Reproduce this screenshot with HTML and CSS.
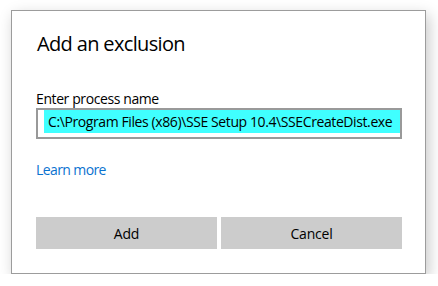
FILE: index.html
```html
<!DOCTYPE html>
<html>
<head>
<meta charset="utf-8">
<link rel="stylesheet" href="styles.css">
</head>
<body>
<div class="dialog">
  <h1 class="title">Add an exclusion</h1>
  <label class="label">Enter process name</label>
  <div class="input"><span class="sel">C:\Program Files (x86)\SSE Setup 10.4\SSECreateDist.exe</span></div>
  <a class="link">Learn more</a>
  <div class="buttons">
    <button class="btn">Add</button>
    <button class="btn">Cancel</button>
  </div>
</div>
</body>
</html>
```

FILE: styles.css
```css
html, body {
  margin: 0;
  padding: 0;
  background: #ffffff;
}
body {
  padding: 10px 0 0 11px;
  font-family: "Open Sans", "Noto Sans", sans-serif;
  color: #000;
}
.dialog {
  box-sizing: border-box;
  width: 415px;
  height: 264px;
  background: #fff;
  border: 1px solid #9c9c9c;
  box-shadow: 3px 5px 14px rgba(0,0,0,0.22);
  padding: 0 23px 0 24px;
  display: flex;
  flex-direction: column;
}
.title {
  margin: 19px 0 0 1px;
  font-size: 20px;
  font-weight: 400;
  line-height: 28px;
  letter-spacing: -0.65px;
}
.label {
  margin-top: 32px;
  font-size: 14px;
  line-height: 18px;
  letter-spacing: -0.4px;
  display: block;
}
.input {
  box-sizing: border-box;
  height: 31px;
  border: 2px solid #999;
  padding: 0 0 0 6px;
  display: flex;
  align-items: flex-start;
}
.sel {
  flex: 1;
  background: #40ffff;
  height: 23px;
  line-height: 23px;
  font-size: 14px;
  letter-spacing: -0.4px;
  padding-left: 4px;
  white-space: nowrap;
  overflow: hidden;
}
.link {
  margin-top: 22px;
  font-size: 14px;
  line-height: 18px;
  letter-spacing: -0.6px;
  color: #0a72cf;
  align-self: flex-start;
}
.buttons {
  margin-top: 38px;
  display: flex;
  gap: 4px;
}
.btn {
  flex: 1;
  height: 32px;
  border: 0;
  background: #cccccc;
  font-family: inherit;
  font-size: 14px;
  letter-spacing: -0.2px;
  color: #000;
  padding: 0;
}
```
